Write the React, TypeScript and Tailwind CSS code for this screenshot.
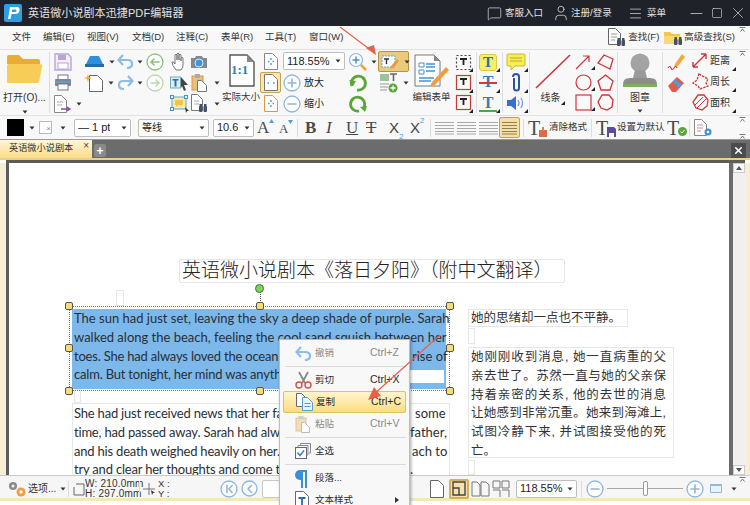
import type { ReactNode } from "react"
import { Minus, Square, X, Menu, User, MessageSquare } from "lucide-react"

const CJK = "font-['Liberation_Sans','Noto_Sans_CJK_SC',sans-serif]"

// px-unit svg so the drawing numbers can be read straight off the screenshot
function Ic({ w, h, children, className }: { w: number; h: number; children: ReactNode; className?: string }) {
  return (
    <svg width={w} height={h} viewBox={`0 0 ${w} ${h}`} fill="none" className={`shrink-0 ${className ?? ""}`}>
      {children}
    </svg>
  )
}

function Caret({ className }: { className?: string }) {
  return (
    <svg width="6" height="4" viewBox="0 0 6 4" className={`shrink-0 ${className ?? ""}`}>
      <path d="M0.5 0.5h5L3 3.5z" fill="#333" />
    </svg>
  )
}

function Corner() {
  return (
    <svg width="4" height="4" viewBox="0 0 4 4" className="absolute right-0 bottom-0">
      <path d="M4 0v4H0z" fill="#222" />
    </svg>
  )
}

function Collapse({ className }: { className?: string }) {
  return (
    <svg width="7" height="5" viewBox="0 0 7 5" className={className}>
      <path d="M0.5 0.5h6M1.5 4.5L3.5 2l2 2.5" stroke="#777" fill="none" />
    </svg>
  )
}

function Doc({ w = 14, h = 18, stroke = "#555", fill = "#fff", x = 0.5, y = 0.5 }: { w?: number; h?: number; stroke?: string; fill?: string; x?: number; y?: number }) {
  return <path d={`M${x} ${y}h${w - 5}l5 5v${h - 5}h-${w}z`} stroke={stroke} fill={fill} />
}

function Binoculars({ x, y }: { x: number; y: number }) {
  return (
    <g fill="#44506a">
      <rect x={x} y={y + 2} width="3.5" height="6" rx="1" />
      <rect x={x + 4.5} y={y + 2} width="3.5" height="6" rx="1" />
      <rect x={x + 0.5} y={y} width="2.5" height="3" />
      <rect x={x + 5} y={y} width="2.5" height="3" />
    </g>
  )
}

function Circle({ d, stroke = "#8fb7dc", size = 18 }: { d: string; stroke?: string; size?: number }) {
  return (
    <Ic w={size} h={size}>
      <circle cx={size / 2} cy={size / 2} r={size / 2 - 1} stroke={stroke} strokeWidth="1.3" fill="#fff" />
      <path d={d} stroke={stroke} strokeWidth="1.6" strokeLinecap="round" strokeLinejoin="round" />
    </Ic>
  )
}

function Row({ children, className }: { children: ReactNode; className?: string }) {
  return <div className={`h-[21px] flex items-center ${className ?? ""}`}>{children}</div>
}

function Col({ className, children }: { className: string; children: ReactNode }) {
  return <div className={`shrink-0 flex flex-col pt-[1px] ${className}`}>{children}</div>
}

function Drop({ className, label, text }: { className: string; label: string; text?: string }) {
  return (
    <div className={`h-[18px] shrink-0 bg-white border border-[#bdbdbd] rounded-[2px] flex items-center justify-between pl-[3px] pr-[3px] text-[#222] ${text ?? "text-[11px]"} ${className}`}>
      <span className="whitespace-nowrap overflow-hidden">{label}</span>
      <Caret className="ml-[1px]" />
    </div>
  )
}

function Sep({ className }: { className: string }) {
  return <div className={`w-px shrink-0 bg-[#dcdcdc] ${className}`} />
}

function Titlebar() {
  return (
    <div className="h-[26px] shrink-0 bg-[#1f2229] flex items-center pl-[4px] text-[#e3e3e3] text-[11px]">
      <div className="w-[18px] h-[18px] rounded-[2px] bg-[#2d9fe0] flex items-center justify-center">
        <Ic w={14} h={14}>
          <path d="M2 13L4 1h7q3 0 2.5 3.5T9 8H5.5L4.5 13z" fill="#fff" />
          <path d="M6.2 3.5L5.8 6h3q1.5 0 1.7-1.3T9 3.5z" fill="#2d9fe0" />
        </Ic>
      </div>
      <span className="ml-[6px] tracking-[0.1px]">英语微小说剧本迅捷PDF编辑器</span>
      <div className="ml-auto flex items-center text-[9.5px]">
        <MessageSquare size={15} strokeWidth={1.1} />
        <span className="ml-[3px] w-[36px] whitespace-nowrap">客服入口</span>
        <User size={18} strokeWidth={1} className="ml-[11px]" />
        <span className="ml-[1px] w-[41px] whitespace-nowrap">注册/登录</span>
        <Menu size={15} strokeWidth={1.1} className="ml-[16px]" />
        <span className="ml-[4px] w-[19px] whitespace-nowrap">菜单</span>
        <Minus size={19} strokeWidth={0.9} className="ml-[21px]" />
        <Square size={12} strokeWidth={1.2} className="ml-[5px]" />
        <X size={18} strokeWidth={0.9} className="ml-[6px] mr-[3px]" />
      </div>
    </div>
  )
}

const menus = [
  { label: "文件", w: "w-[31px]" },
  { label: "编辑(E)", w: "w-[44px]" },
  { label: "视图(V)", w: "w-[45px]" },
  { label: "文档(D)", w: "w-[44px]" },
  { label: "注释(C)", w: "w-[45px]" },
  { label: "表单(R)", w: "w-[44px]" },
  { label: "工具(T)", w: "w-[44px]" },
  { label: "窗口(W)", w: "w-[44px]" },
]

function Menubar() {
  return (
    <div className="h-[24px] shrink-0 bg-[#f8f8f8] border-b border-[#e2e2e2] flex items-center pl-[12px] text-[9.5px] text-[#333] relative">
      {menus.map((m) => (
        <span key={m.label} className={`${m.w} whitespace-nowrap`}>{m.label}</span>
      ))}
      <div className="ml-auto flex items-center pr-[15px]">
        <Ic w={18} h={19}>
          <Doc w={12} h={16} stroke="#666" />
          <path d="M3 6h6M3 9h6M3 12h4" stroke="#999" />
          <Binoculars x={9} y={10} />
        </Ic>
        <span className="ml-[2px] mr-[4px] whitespace-nowrap">查找(F)</span>
        <Ic w={19} h={17}>
          <path d="M1 3h6l2 2h8v10H1z" fill="#f6c649" />
          <path d="M1 7h17l-2 8H1z" fill="#fbd97a" />
          <Binoculars x={11} y={8} />
        </Ic>
        <span className="ml-[2px] whitespace-nowrap">高级查找(S)</span>
      </div>
      <Collapse className="absolute right-[4px] top-[1px]" />
    </div>
  )
}

function Ribbon() {
  return (
    <div className="h-[66px] shrink-0 bg-[#f8f8f8] border-b border-[#e2e2e2] flex text-[10px] text-[#333] relative">
      {/* open */}
      <div className="w-[50px] shrink-0 flex flex-col items-center border-r border-[#dedede] my-[2px]">
        <Ic w={38} h={30} className="mt-[2px]">
          <path d="M1 3q0-2 2-2h10l4 4h15q2 0 2 2v3H1z" fill="#e9ad2f" />
          <path d="M1 28V12q0-2 2-2h31q3 0 2 3l-3 15q-.4 1-2 1H2q-1 0-1-1z" fill="#f7cd57" />
        </Ic>
        <span className="mt-[6px] whitespace-nowrap">打开(O)...</span>
        <Caret className="mt-[5px]" />
      </div>
      {/* save print export */}
      <Col className="w-[32px] pl-[4px]">
        <Row>
          <Ic w={18} h={18}>
            <path d="M1 1h13l3 3v13H1z" stroke="#b9a5d4" strokeWidth="1.4" fill="#f4eefa" />
            <rect x="4" y="2" width="8" height="5" fill="#b9a5d4" />
            <rect x="4" y="10" width="10" height="6" fill="#fff" stroke="#b9a5d4" />
          </Ic>
        </Row>
        <Row>
          <Ic w={18} h={17}>
            <rect x="4" y="1" width="10" height="5" fill="#fff" stroke="#777" />
            <rect x="1" y="5" width="16" height="7" rx="1" fill="#7b8794" />
            <rect x="4" y="10" width="10" height="6" fill="#fff" stroke="#777" />
            <path d="M1 8h16" stroke="#55aee0" />
          </Ic>
        </Row>
        <Row>
          <Ic w={18} h={18}>
            <Doc w={12} h={17} stroke="#888" />
            <path d="M3 7h6M3 10h5" stroke="#aaa" />
            <path d="M7 14h8m-2-2l3 2-3 2" stroke="#8e44ad" strokeWidth="1.3" />
          </Ic>
          <Caret className="ml-[4px]" />
        </Row>
      </Col>
      {/* stamp new */}
      <Col className="w-[32px] pl-[2px]">
        <Row>
          <Ic w={21} h={13}>
            <path d="M6 1h9l4 8H2z" fill="#2f8fdc" />
            <path d="M1 9h19v3H1z" fill="#1a6fb5" />
          </Ic>
          <Caret className="ml-[4px]" />
        </Row>
        <Row>
          <Ic w={20} h={18}>
            <Doc w={13} h={16} x={5.5} y={1.5} stroke="#666" />
            <path d="M4 0l1 3 3 1-3 1-1 3-1-3-3-1 3-1z" fill="#f3a93a" />
          </Ic>
          <Caret className="ml-[4px]" />
        </Row>
      </Col>
      {/* undo redo */}
      <Col className="w-[27px] pl-[3px]">
        <Row>
          <Ic w={17} h={15}>
            <path d="M2 6h9q4 0 4 4t-5 4" stroke="#8dbde6" strokeWidth="2.2" />
            <path d="M6 1L1.5 6 6 11" stroke="#8dbde6" strokeWidth="2.2" />
          </Ic>
          <Caret className="ml-[3px]" />
        </Row>
        <Row>
          <Ic w={17} h={15}>
            <path d="M15 6H6q-4 0-4 4t5 4" stroke="#8dbde6" strokeWidth="2.2" />
            <path d="M11 1l4.5 5-4.5 5" stroke="#8dbde6" strokeWidth="2.2" />
          </Ic>
          <Caret className="ml-[3px]" />
        </Row>
      </Col>
      {/* back forward */}
      <Col className="w-[29px] pl-[5px]">
        <Row><Circle stroke="#8fbf7a" d="M13 9H5m3-3L5 9l3 3" /></Row>
        <Row><Circle stroke="#b9d8ab" d="M5 9h8m-3-3l3 3-3 3" /></Row>
      </Col>
      {/* tools */}
      <Col className="w-[52px]">
        <Row className="pl-[1px]">
          <Ic w={16} h={19}>
            <path d="M5 18Q1 13 1 10q1-1 3 2V3q1-2 2 0v5-6q1-2 2 0v6-5q1-2 2 0v6-3q1-1.500 2 0v7q0 3-2 5z" stroke="#777" fill="#fff" />
          </Ic>
          <Ic w={18} h={14} className="ml-[3px]">
            <path d="M1 3h4l1-2h6l1 2h4v10H1z" fill="#7d8a94" />
            <circle cx="9" cy="8" r="4" fill="#3e97de" stroke="#dce7ef" />
          </Ic>
        </Row>
        <Row>
          <Ic w={20} h={18}>
            <rect x="0.500" y="3" width="10" height="11" fill="#dcecf8" stroke="#7aa" />
            <path d="M2.500 5h6v1.500H6.500v6H4.500v-6h-2z" fill="#2d6ea8" />
            <path d="M11 3l7 8h-4l2 5-2 1-2-5-1 2z" fill="#444" />
          </Ic>
          <Ic w={16} h={19} className="ml-[1px]">
            <rect x="1" y="3" width="11" height="14" fill="#ecc07c" stroke="#d49a45" />
            <rect x="4" y="1" width="5" height="4" fill="#aaa" />
            <Doc w={9} h={11} x={6.500} y={7.500} stroke="#777" />
          </Ic>
          <Caret className="ml-[7px]" />
        </Row>
        <Row>
          <Ic w={20} h={18}>
            <rect x="2" y="2" width="14" height="12" fill="#fbe9a8" stroke="#5aa5dc" />
            <path d="M5 5h8v5H8l-2 2v-2H5z" fill="#f0c24e" />
            <rect x="0.500" y="0.500" width="3" height="3" fill="#fff" stroke="#3f92d2" />
            <rect x="14.500" y="0.500" width="3" height="3" fill="#fff" stroke="#3f92d2" />
            <rect x="0.500" y="12.500" width="3" height="3" fill="#fff" stroke="#3f92d2" />
            <path d="M15 12l4 4-2 0-1 2z" fill="#333" />
          </Ic>
          <Ic w={16} h={19} className="ml-[1px]">
            <Doc w={11} h={16} stroke="#777" />
            <path d="M3 7h5M3 10h5" stroke="#aaa" />
            <Binoculars x={8} y={10} />
          </Ic>
          <Caret className="ml-[7px]" />
        </Row>
      </Col>
      {/* 1:1 */}
      <div className="w-[38px] shrink-0 flex flex-col items-center relative">
        <Ic w={27} h={33} className="mt-[4px]">
          <path d="M2 1h17l7 7v24H2z" stroke="#555" strokeWidth="1.400" fill="#fff" />
          <path d="M19 1v7h7z" fill="#888" />
        </Ic>
        <span className="absolute left-[9px] top-[12px] text-[#2f7ec0] text-[13px] leading-[16px] font-['Liberation_Serif',serif] font-bold">1:1</span>
        <span className="mt-[3px] whitespace-nowrap text-[9.500px]">实际大小</span>
      </div>
      {/* fit buttons */}
      <Col className="w-[23px]">
        <Row className="pl-[4px]">
          <Ic w={14} h={17}>
            <Doc w={13} h={16} stroke="#888" />
            <path d="M7 5v2m0 3v2M4 8.500h1.500m3 0H10" stroke="#4a9fdc" strokeWidth="1.400" />
          </Ic>
        </Row>
        <div className="h-[21px] w-[21px] border border-[#c8a24c] bg-[#f9e6b0] rounded-[2px] flex items-center justify-center">
          <Ic w={14} h={17}>
            <Doc w={13} h={16} stroke="#777" />
            <path d="M3.500 9h1.500m4 0h1.500" stroke="#4a9fdc" strokeWidth="1.600" />
          </Ic>
        </div>
        <Row className="pl-[4px]">
          <Ic w={14} h={17}>
            <Doc w={13} h={16} stroke="#d89a3a" />
            <path d="M7 5v2m0 3v2M4 8.500h1.500m3 0H10" stroke="#4a9fdc" strokeWidth="1.400" />
          </Ic>
        </Row>
      </Col>
      {/* zoom */}
      <Col className="w-[64px] !pt-[2px]">
        <Drop className="w-[62px]" label="118.55%" />
        <Row className="mt-[2px]">
          <Circle d="M5 9h8M9 5v8" />
          <span className="ml-[3px] text-[#222]">放大</span>
        </Row>
        <Row>
          <Circle d="M5 9h8" />
          <span className="ml-[3px] text-[#222]">缩小</span>
        </Row>
      </Col>
      <Col className="w-[31px] pl-[1px]">
        <Row>
          <Ic w={19} h={19}>
            <circle cx="8" cy="8" r="6.500" stroke="#8fb7dc" strokeWidth="1.200" fill="#fff" />
            <path d="M4.500 8h7M8 4.500v7" stroke="#3f92d2" strokeWidth="1.500" />
            <path d="M13 13l5 5" stroke="#e8a33c" strokeWidth="2.500" />
          </Ic>
          <Caret className="ml-[4px]" />
        </Row>
        <Row className="pl-[1px]">
          <Ic w={18} h={18}>
            <path d="M3 12a7 7 0 1 1 5 4" stroke="#5aa53a" strokeWidth="2.800" />
            <path d="M0 6l7 1-3 5z" fill="#5aa53a" />
          </Ic>
        </Row>
        <Row className="pl-[1px]">
          <Ic w={18} h={18}>
            <path d="M15 12a7 7 0 1 0-5 4" stroke="#5aa53a" strokeWidth="2.800" />
            <path d="M18 11l-7 1 5 5z" fill="#5aa53a" />
          </Ic>
        </Row>
      </Col>
      {/* edit tools */}
      <Col className="w-[35px] !pt-0">
        <div className="h-[21px] w-[31px] border border-[#b59245] bg-[#ecca7c] rounded-[2px] flex items-center pl-[1px] mt-[1px]">
          <Ic w={20} h={16}>
            <rect x="2" y="2" width="13" height="11" fill="#fff" stroke="#5aa5dc" strokeDasharray="2 1" />
            <path d="M4 5h5M6.500 5v5" stroke="#333" strokeWidth="1.400" />
            <path d="M11 12l6-7 2 2-6 7-3 1z" fill="#ee9a3a" />
          </Ic>
          <Caret className="ml-[4px]" />
        </div>
        <div className="h-[21px] flex items-center pl-[2px]">
          <Ic w={18} h={20}>
            <rect x="0" y="1" width="9" height="7" fill="#9cc3a0" />
            <path d="M10 1h7M13.500 1v7" stroke="#666" strokeWidth="1.600" />
            <path d="M0 11h9M0 14h8M0 17h7" stroke="#999" />
            <circle cx="13" cy="15" r="4.500" fill="#5aa53a" />
            <path d="M10.500 15h5M13 12.500v5" stroke="#fff" strokeWidth="1.300" />
          </Ic>
          <Caret className="ml-[5px]" />
        </div>
      </Col>
      <div className="w-[37px] shrink-0 flex flex-col items-center">
        <Ic w={36} h={33} className="mt-[4px]">
          <path d="M1 1h19l6 6v25H1z" stroke="#777" fill="#fff" />
          <path d="M20 1v6h6z" fill="#888" />
          <path d="M5 9h5v4H5zM5 16h5v4H5z" stroke="#3f92d2" />
          <path d="M12 10h9M12 13h9M12 17h9M5 24h15M5 27h12" stroke="#3f92d2" strokeWidth="1.300" />
          <path d="M18 28l14-15 3 3-14 15-5 1z" fill="#ef9e3e" />
        </Ic>
        <span className="whitespace-nowrap mt-[3px] text-[9.500px]">编辑表单</span>
      </div>
      {/* form boxes */}
      <Col className="w-[27px] pl-[5px] border-r border-[#dedede] my-[2px] !pt-0">
        {["#444", "#c73a3a", "#c73a3a"].map((c, i) => (
          <Row key={i} className="relative w-[18px]">
            <Ic w={17} h={17}>
              <rect x="1.500" y="1.500" width="14" height="14" stroke={c} strokeWidth="1.200" strokeDasharray={i === 0 ? "2 2" : undefined} />
              <path d="M5 5h7M8.500 5v6" stroke="#222" strokeWidth="1.800" />
            </Ic>
            <Corner />
          </Row>
        ))}
      </Col>
      {/* text markup */}
      <Col className="w-[26px] pl-[2px] border-r border-[#dedede] my-[2px] !pt-0">
        <Row className="relative w-[21px]">
          <div className="w-[18px] h-[17px] rounded-[3px] bg-[#f8f06a] border border-[#d8c94c] flex items-center justify-center">
            <span className="text-[#2b6cb5] text-[15px] leading-none font-bold font-['Liberation_Serif',serif]">T</span>
          </div>
          <Corner />
        </Row>
        <Row className="relative w-[21px] justify-center pr-[3px]">
          <span className="text-[#3a78bd] text-[16px] leading-none font-bold font-['Liberation_Serif',serif]">T</span>
          <div className="absolute left-0 right-[3px] top-[10px] h-[2px] bg-[#d23b3b]" />
          <Corner />
        </Row>
        <Row className="relative w-[21px] justify-center pr-[3px]">
          <span className="text-[#3a78bd] text-[16px] leading-none font-bold font-['Liberation_Serif',serif]">T</span>
          <div className="absolute left-0 right-[3px] bottom-[1px] h-[2px] bg-[#4da64a]" />
          <Corner />
        </Row>
      </Col>
      <Col className="w-[27px] pl-[3px] border-r border-[#dedede] my-[2px] !pt-0">
        <Row className="relative w-[22px]">
          <Ic w={20} h={18}>
            <path d="M2 1h16q1 0 1 1v10q0 1-1 1H9l-4 4v-4H2q-1 0-1-1V2q0-1 1-1z" fill="#f7ee4f" stroke="#c9b93a" />
            <path d="M4 5h12M4 8h12" stroke="#b8a832" />
          </Ic>
          <Corner />
        </Row>
        <Row className="relative w-[22px] justify-center pr-[2px]">
          <Ic w={10} h={20}>
            <path d="M2 5a3 3 0 0 1 6 0v11a2.500 2.500 0 0 1-5 0V6" stroke="#2a52a8" strokeWidth="2" />
          </Ic>
          <Corner />
        </Row>
        <Row className="relative w-[22px]">
          <Ic w={20} h={16}>
            <path d="M1 5h4l5-4v14l-5-4H1z" fill="#3a6fd0" />
            <path d="M12 5q2 3 0 6M15 3q3 5 0 10" stroke="#7d9bc9" strokeWidth="1.300" />
          </Ic>
          <Corner />
        </Row>
      </Col>
      {/* lines */}
      <div className="w-[45px] shrink-0 flex flex-col items-center">
        <Ic w={36} h={36} className="mt-[3px]">
          <path d="M1 35L35 2" stroke="#d0343c" strokeWidth="1.600" />
        </Ic>
        <span className="mt-[1px] relative pr-[4px]">线条<Corner /></span>
      </div>
      <Col className="w-[43px] border-r border-[#dedede] my-[2px] !pt-0">
        <Row>
          <div className="relative w-[20px]">
            <Ic w={16} h={16}>
              <path d="M1 15L14 2m-6 0h6v6" stroke="#d0343c" strokeWidth="1.200" />
            </Ic>
            <Corner />
          </div>
          <Ic w={17} h={17} className="ml-[2px]">
            <path d="M7 1l9 4-3 10-6-3-6-3z" stroke="#d0343c" strokeWidth="1.300" />
          </Ic>
        </Row>
        <Row>
          <div className="relative w-[20px]">
            <Ic w={17} h={17}>
              <circle cx="8.500" cy="8.500" r="7.500" stroke="#d0343c" strokeWidth="1.200" />
            </Ic>
            <Corner />
          </div>
          <Ic w={17} h={17} className="ml-[2px]">
            <path d="M8.500 1L16 7l-3 9H4L1 7z" stroke="#d0343c" strokeWidth="1.300" />
          </Ic>
        </Row>
        <Row>
          <div className="relative w-[20px]">
            <Ic w={17} h={17}>
              <rect x="1" y="1" width="15" height="15" stroke="#d0343c" strokeWidth="1.200" />
            </Ic>
            <Corner />
          </div>
          <Ic w={17} h={17} className="ml-[2px]">
            <path d="M5 1h7l4 5-1 7-5 3-6-2-3-6z" stroke="#d0343c" strokeWidth="1.300" />
          </Ic>
        </Row>
      </Col>
      {/* stamp */}
      <div className="w-[45px] shrink-0 flex flex-col items-center border-r border-[#dedede] my-[2px]">
        <Ic w={36} h={37} className="">
          <circle cx="18" cy="11" r="9.500" fill="#a3a3a3" />
          <path d="M13 18h10l2 8H11z" fill="#9a9a9a" />
          <path d="M1 32q0-6 7-6h20q7 0 7 6z" fill="#8c8c8c" />
          <rect x="1" y="32" width="34" height="3" fill="#7bb063" />
        </Ic>
        <span className="mt-[1px]">图章</span>
        <Caret className="mt-[4px]" />
      </div>
      {/* measure */}
      <Col className="w-[27px] pl-[4px] !pt-0">
        <Row className="relative h-[24px]">
          <Ic w={19} h={19}>
            <path d="M8 11L15 1l3 3-7 9-4 1z" fill="#f3a93a" />
            <path d="M1 15q2-3 3 0t3 0 3 0" stroke="#d0343c" strokeWidth="1.100" />
          </Ic>
        </Row>
        <Row className="h-[20px]">
          <Ic w={18} h={17}>
            <path d="M1 10L10 1l7 6-8 9H5z" fill="#e55b4a" />
            <path d="M8 3l7 6-3 3-6-6z" fill="#4a9fdc" />
          </Ic>
        </Row>
      </Col>
      <Col className="w-[55px] pl-[2px] !pt-0">
        <Row className="h-[21px] relative w-[44px]">
          <Ic w={15} h={15}>
            <path d="M1 14L14 1M1 14v-5m0 5h5M14 1v5m0-5H9" stroke="#d0343c" strokeWidth="1.400" />
          </Ic>
          <span className="ml-[3px] whitespace-nowrap">距离</span>
          <Corner />
        </Row>
        <Row className="h-[21px] relative w-[44px]">
          <Ic w={17} h={17}>
            <path d="M7 1l9 5-2 4 2 3-8 3-2-3-5-3 4-3z" stroke="#d0343c" strokeWidth="1.300" strokeDasharray="2.500 1" />
          </Ic>
          <span className="ml-[1px] whitespace-nowrap">周长</span>
          <Corner />
        </Row>
        <Row className="h-[21px] relative w-[44px]">
          <Ic w={17} h={17}>
            <path d="M6 1h6l4 5-1 6-5 4-6-2-3-6z" stroke="#d0343c" strokeWidth="1.300" />
            <path d="M3 11L11 3M5 14l9-9" stroke="#d0343c" />
          </Ic>
          <span className="ml-[1px] whitespace-nowrap">面积</span>
          <Corner />
        </Row>
      </Col>
      <Collapse className="absolute right-[4px] top-[1px]" />
    </div>
  )
}

function Lines({ w = 19 }: { w?: number }) {
  return (
    <Ic w={w} h={14}>
      <path d={`M0 1.500h${w}M0 4.500h${w}M0 7.500h${w}M0 10.500h${w}M0 13h${w}`} stroke="#a8a8a8" />
    </Ic>
  )
}

function Glyph({ children, className }: { children: ReactNode; className: string }) {
  return <span className={`font-['Liberation_Serif',serif] text-[#4a4a4a] leading-none ${className}`}>{children}</span>
}

function Formatbar() {
  return (
    <div className="h-[23px] shrink-0 bg-[#f8f8f8] flex items-center pl-[7px] text-[10px] text-[#333] relative">
      <div className="w-[17px] h-[17px] bg-black" />
      <Caret className="ml-[5px]" />
      <div className="w-[13px] h-[13px] bg-white border border-[#bbb] ml-[4px] relative">
        <span className="absolute right-0 bottom-0 text-[8px] leading-none text-[#888]">×</span>
      </div>
      <Caret className="ml-[8px]" />
      <Drop className="w-[57px] ml-[8px]" label="— 1 pt" />
      <Drop className="w-[71px] ml-[7px]" label="等线" text="text-[10px]" />
      <Drop className="w-[41px] ml-[4px]" label="10.6" />
      <div className="w-[20px] ml-[3px] flex items-start">
        <Glyph className="text-[17px]">A</Glyph>
        <svg width="5" height="4"><path d="M0 4h5L2.500 0z" fill="#4a9fdc" /></svg>
      </div>
      <div className="w-[18px] ml-[2px] flex items-start">
        <Glyph className="text-[13px] mt-[2px]">A</Glyph>
        <svg width="5" height="4"><path d="M0 0h5L2.500 4z" fill="#4a9fdc" /></svg>
      </div>
      <Sep className="h-[18px] ml-[0px]" />
      <Glyph className="text-[17px] font-bold ml-[7px] w-[12px]">B</Glyph>
      <Glyph className="text-[17px] italic ml-[9px] w-[11px]">I</Glyph>
      <Glyph className="text-[17px] underline ml-[9px] w-[12px]">U</Glyph>
      <Glyph className="text-[17px] line-through ml-[8px] w-[14px]">T</Glyph>
      <span className="ml-[9px] w-[21px] text-[15px] leading-none text-[#444] font-['Liberation_Sans',sans-serif]">X<sub className="text-[8px] text-[#4a9fdc] align-sub">2</sub></span>
      <span className="w-[20px] text-[15px] leading-none text-[#444] font-['Liberation_Sans',sans-serif]">X<sup className="text-[8px] text-[#4a9fdc] align-super">2</sup></span>
      <Sep className="h-[18px] ml-[0px]" />
      <div className="ml-[4px]"><Lines /></div>
      <div className="ml-[3px]"><Lines /></div>
      <div className="ml-[3px]"><Lines /></div>
      <div className="w-[21px] h-[21px] ml-[1px] bg-[#f6dfa6] border border-[#c8a24c] rounded-[2px] flex items-center justify-center">
        <Ic w={15} h={14}>
          <path d="M0 1.500h15M0 4.500h15M0 7.500h15M0 10.500h15M0 13h15" stroke="#8d8054" />
        </Ic>
      </div>
      <Sep className="h-[18px] ml-[3px]" />
      <Glyph className="text-[20px] ml-[4px] w-[11px]">T</Glyph>
      <Ic w={8} h={10} className="mt-[8px]">
        <rect x="0" y="3" width="8" height="7" fill="#e0694a" />
        <rect x="3" y="0" width="2" height="4" fill="#c98a4a" />
      </Ic>
      <span className="ml-[2px] w-[37px] whitespace-nowrap text-[9.500px]">清除格式</span>
      <Sep className="h-[18px] ml-[5px]" />
      <Glyph className="text-[20px] ml-[4px] w-[11px]">T</Glyph>
      <Ic w={9} h={10} className="mt-[8px]">
        <path d="M0 0h7l2 2v8H0z" fill="#5c4a9c" />
        <rect x="2" y="6" width="5" height="4" fill="#fff" />
      </Ic>
      <span className="ml-[1px] w-[45px] whitespace-nowrap text-[9.500px]">设置为默认</span>
      <Glyph className="text-[20px] ml-[5px] w-[11px]">T</Glyph>
      <Ic w={9} h={9} className="mt-[8px]">
        <circle cx="4.500" cy="4.500" r="4.500" fill="#5aa53a" />
        <path d="M2.500 4.500l1.500 1.500 2.500-3" stroke="#fff" />
      </Ic>
      <Sep className="h-[18px] ml-[2px]" />
      <Ic w={19} h={18} className="ml-[4px]">
        <Doc w={12} h={16} stroke="#888" />
        <path d="M3 6h6M3 9h6M3 12h4" stroke="#d88" />
        <circle cx="14" cy="13" r="3.500" fill="#3f92d2" />
        <circle cx="14" cy="13" r="1.300" fill="#fff" />
      </Ic>
      <Collapse className="absolute right-[4px] top-[1px]" />
      <Collapse className="absolute right-[4px] bottom-[0px]" />
    </div>
  )
}

function Tabstrip() {
  return (
    <div className="h-[19px] shrink-0 bg-[#6c6c6c] border-t border-[#9a9a9a] flex items-end relative">
      <div className="w-[92px] h-[18px] bg-gradient-to-b from-[#fff6d8] to-[#fbdc86] flex items-center pl-[9px] text-[9.2px] text-[#333] relative">
        英语微小说剧本
        <span className="absolute right-[3px] top-[1px] text-[10px] leading-none text-[#444]">×</span>
      </div>
      <div className="w-[12px] h-[13px] ml-[2px] mb-[1px] bg-[#8a8a8a] rounded-[2px] flex items-center justify-center text-white font-bold text-[12px] leading-none">+</div>
      <div className="ml-auto mr-[4px] w-[15px] h-[15px] bg-[#4c4c4c] flex items-center justify-center">
        <X size={11} strokeWidth={3.5} color="#fff" />
      </div>
    </div>
  )
}

function Line({ children, className }: { children: ReactNode; className?: string }) {
  return <div className={`whitespace-nowrap [text-align:justify] [text-align-last:justify] h-[18.8px] leading-[18.8px] ${className ?? ""}`}>{children}</div>
}

// a paragraph line whose middle is hidden behind the context menu: only the two ends show
function Split({ l, r, lw, rw }: { l: string; r?: string; lw: string; rw?: string }) {
  return (
    <div className="flex justify-between h-[18.8px] leading-[18.8px] whitespace-nowrap w-[371px]">
      <div className={`[text-align-last:justify] tracking-[-0.2px] ${lw}`}>{l}</div>
      {r && <div className={`[text-align-last:justify] ${rw ?? ""}`}>{r}</div>}
    </div>
  )
}

function Handle({ x, y }: { x: number; y: number }) {
  return <div className="absolute w-[8px] h-[8px] bg-[#f7dc7a] border border-[#555] rounded-[2px]" style={{ left: x - 4, top: y - 4 }} />
}

// everything in here sits on the PDF page itself, so it is placed by page coordinates
function Page() {
  const cn = ["她刚刚收到消息, 她一直病重的父", "亲去世了。苏然一直与她的父亲保", "持着亲密的关系, 他的去世的消息", "让她感到非常沉重。她来到海滩上,", "试图冷静下来, 并试图接受他的死"]
  return (
    <div className="flex-1 bg-white relative overflow-hidden text-[#333]">
      <div className="absolute left-[170px] top-[96px] w-[386px] h-[24px] border border-[#e6e6e6] rounded-[2px] text-[19px] leading-[22px] pl-[2px] text-[#222] whitespace-nowrap font-light">
        英语微小说剧本《落日夕阳》（附中文翻译）
      </div>
      <div className="absolute left-[107px] top-[127px] w-[8px] h-[16px] border border-[#e6e6e6]" />
      <div className="absolute left-[65px] top-[226px] w-[7px] h-[14px] border border-[#e6e6e6]" />

      {/* selection */}
      <div className="absolute left-[60px] top-[143px] w-[381px] h-[85px] border border-dotted border-[#777]" />
      <div className="absolute left-[63px] top-[146px] w-[374px] h-[80px] border-2 border-[#7db8ea] bg-white" />
      <div className="absolute left-[65px] top-[147px] w-[370px] h-[60px] bg-[#7db8ea]" />
      <div className="absolute left-[65px] top-[207px] w-[335px] h-[13px] bg-[#7db8ea]" />
      <div className="absolute left-[65px] top-[220px] w-[370px] h-[5px] bg-[#7db8ea]" />
      <div className="absolute left-[65px] top-[146px] w-[371px] text-[13px] font-['Lato',sans-serif] text-[#2a2f36]">
        <Line>The sun had just set, leaving the sky a deep shade of purple. Sarah</Line>
        <Line>walked along the beach, feeling the cool sand squish between her</Line>
        <Split l="toes. She had always loved the ocean" lw="w-[203px]" r="rise of" rw="w-[33px]" />
        <Split l="calm. But tonight, her mind was anyth" lw="w-[206px]" />
      </div>
      <div className="absolute left-[251px] top-[122px] h-[20px] border-l border-dotted border-[#555]" />
      <div className="absolute left-[246px] top-[121px] w-[9px] h-[9px] rounded-full bg-[#7ad65a] border border-[#3c7a2c]" />
      <Handle x={60} y={143} />
      <Handle x={251} y={143} />
      <Handle x={441} y={143} />
      <Handle x={60} y={185} />
      <Handle x={441} y={185} />
      <Handle x={60} y={228} />
      <Handle x={251} y={228} />
      <Handle x={441} y={228} />

      {/* next paragraph */}
      <div className="absolute left-[63px] top-[240px] w-[378px] h-[90px] border border-[#e6e6e6] pl-[1px] text-[13px] font-['Lato',sans-serif] text-[#2a2f36]">
        <Split l="She had just received news that her fat" lw="w-[207px]" r="some" rw="w-[30px]" />
        <Split l="time, had passed away. Sarah had alw" lw="w-[206px]" r="father," rw="w-[35px]" />
        <Split l="and his death weighed heavily on her." lw="w-[203px]" r="ach to" rw="w-[33px]" />
        <Split l="try and clear her thoughts and come t" lw="w-[206px]" r="." rw="mr-[32px]" />
      </div>

      <div className="absolute left-[459px] top-[146px] w-[160px] h-[18px] border border-[#e6e6e6] text-[12.5px] leading-[16px] pl-[2px] whitespace-nowrap">
        她的思绪却一点也不平静。
      </div>
      <div className="absolute left-[459px] top-[165px] w-[7px] h-[16px] border border-[#e6e6e6]" />
      <div className="absolute left-[459px] top-[184px] w-[206px] h-[111px] border border-[#e6e6e6] text-[12.5px] pl-[2px]">
        {cn.map((t) => (
          <Line key={t} className="w-[195px]">{t}</Line>
        ))}
        <div className="leading-[18.800px]">亡。</div>
      </div>
      <div className="absolute left-[459px] top-[297px] w-[7px] h-[15px] border border-[#e6e6e6]" />
    </div>
  )
}

function Scrollbar() {
  return (
    <div className="w-[12px] shrink-0 bg-[#f0f0f0] flex flex-col justify-between">
      <div className="h-[10px] bg-[#fafafa] border border-[#ccc] flex items-center justify-center">
        <svg width="6" height="4"><path d="M0 4h6L3 0z" fill="#555" /></svg>
      </div>
      <div className="h-[10px] bg-[#fafafa] border border-[#ccc] flex items-center justify-center">
        <svg width="6" height="4"><path d="M0 0h6L3 4z" fill="#555" /></svg>
      </div>
    </div>
  )
}

function Statusbar() {
  return (
    <div className="h-[23px] shrink-0 bg-[#f6f6f6] border-t border-[#c9c9c9] flex items-center pl-[7px] pt-[3px] text-[10px] text-[#333] relative">
      <Ic w={20} h={20}>
        <circle cx="6" cy="7" r="4" fill="#8a8a8a" />
        <circle cx="6" cy="7" r="1.500" fill="#f6f6f6" />
        <circle cx="14" cy="13" r="4.500" fill="#ef9e3e" />
        <circle cx="14" cy="13" r="1.700" fill="#f6f6f6" />
      </Ic>
      <span className="ml-[1px] w-[29px] whitespace-nowrap">选项...</span>
      <Caret className="ml-[3px]" />
      <Sep className="h-[16px] ml-[2px]" />
      <Ic w={12} h={14} className="ml-[4px]">
        <path d="M3 2h8v11H1V5" stroke="#666" />
      </Ic>
      <div className="w-[54px] font-['Liberation_Sans',sans-serif] leading-[10px] text-[10px] whitespace-nowrap tracking-[0.2px]">
        <div>W: 210.0mm</div>
        <div>H: 297.0mm</div>
      </div>
      <Sep className="h-[16px]" />
      <Ic w={14} h={14} className="ml-[3px]">
        <path d="M6 1v12M0 7h12" stroke="#777" />
        <path d="M8 8l4 3-2 0-1 2z" fill="#333" />
      </Ic>
      <div className="ml-[1px] w-[15px] font-['Liberation_Sans',sans-serif] leading-[10px] text-[9.500px] whitespace-nowrap">
        <div>X :</div>
        <div>Y :</div>
      </div>
      <div className="ml-[47px] flex items-center gap-[3px]">
        <Circle d="M7 5.500v7m5-7L9 9l3 3.500" />
        <Circle d="M10.500 5.500L7 9l3.500 3.500" size={17} />
        <div className="w-[40px] h-[18px] bg-white border border-[#c9c9c9] rounded-[2px] ml-[1px]" />
      </div>
      <div className="ml-[128px]">
        <Ic w={14} h={18}>
          <Doc w={13} h={17} stroke="#666" />
        </Ic>
      </div>
      <div className="ml-[5px] w-[20px] h-[20px] border-2 border-[#d6ae5c] bg-[#f6e2ae] rounded-[2px] flex items-center justify-center">
        <Ic w={14} h={15}>
          <path d="M1 1h12v13H1zM1 7h6v7" stroke="#444" strokeWidth="1.400" />
        </Ic>
      </div>
      <Ic w={19} h={16} className="ml-[2px]">
        <path d="M1 1h5l3 3v11H1zM10 1h5l3 3v11h-8z" stroke="#777" />
      </Ic>
      <Ic w={18} h={17} className="ml-[2px]">
        <path d="M1 1h7v7H1zM10 1h7v7h-7zM1 10h7v7M10 10h7v7" stroke="#777" />
      </Ic>
      <Drop className="w-[61px] ml-[6px]" label="118.55%" />
      <Sep className="h-[16px] ml-[4px]" />
      <div className="ml-[4px]"><Circle d="M5 9h8" /></div>
      <div className="w-[76px] mx-[3px] relative h-[1px] bg-[#aaa]">
        <div className="absolute left-[36px] -top-[7px] w-[5px] h-[15px] bg-white border border-[#999] rounded-[2px]" />
      </div>
      <Circle d="M5 9h8M9 5v8" />
      <div className="w-[12px] h-[9px] ml-[6px] border border-[#8fb7dc] bg-[#eaf3fb] rounded-[1px] border-t-2" />
      <Caret className="ml-[9px]" />
      <Collapse className="absolute right-[4px] top-[1px]" />
    </div>
  )
}

function MenuItem({ icon, label, hint, off, on, arrow }: { icon: ReactNode; label: string; hint?: string; off?: boolean; on?: boolean; arrow?: boolean }) {
  return (
    <div className={`h-[22px] mx-[3px] flex items-center rounded-[2px] ${on ? "bg-gradient-to-b from-[#fff5cc] to-[#fbdc7e] border border-[#d8c36a]" : ""} ${off ? "text-[#8a8a8a]" : "text-[#2a2a2a]"}`}>
      <div className="w-[30px] pl-[12px] flex justify-start shrink-0">{icon}</div>
      <span className="ml-[2px] text-[9.5px] w-[55px] whitespace-nowrap">{label}</span>
      {hint && <span className="text-[10.500px] font-['Liberation_Sans',sans-serif]">{hint}</span>}
      {arrow && (
        <svg width="4" height="6" className="ml-[25px]"><path d="M0 0l4 3-4 3z" fill="#333" /></svg>
      )}
    </div>
  )
}

function MenuSep() {
  return <div className="h-[5px] flex items-center pl-[5px] pr-[3px]"><div className="h-px w-full bg-[#dadada]" /></div>
}

function ContextMenu() {
  return (
    <div className="absolute left-[279px] top-[339px] w-[131px] h-[180px] bg-[#f8f8f8] border border-[#bdbdbd] shadow-[1px_1px_3px_rgba(0,0,0,0.35)] pt-[2px] flex flex-col">
      <MenuItem off label="撤销" hint="Ctrl+Z" icon={
        <Ic w={16} h={15}>
          <path d="M2 6h8q5 0 5 4t-5 4" stroke="#8dbde6" strokeWidth="2.200" />
          <path d="M6 1L1.500 6 6 11" stroke="#8dbde6" strokeWidth="2.200" />
        </Ic>} />
      <MenuSep />
      <MenuItem label="剪切" hint="Ctrl+X" icon={
        <Ic w={17} h={18}>
          <path d="M4 1l6 11M13 1L7 12" stroke="#888" strokeWidth="1.800" />
          <circle cx="4" cy="14" r="3" stroke="#d8503c" strokeWidth="1.400" />
          <circle cx="13" cy="14" r="3" stroke="#d8503c" strokeWidth="1.400" />
        </Ic>} />
      <MenuItem on label="复制" hint="Ctrl+C" icon={
        <Ic w={17} h={18}>
          <Doc w={10} h={13} stroke="#667" />
          <Doc w={10} h={13} x={6.500} y={4.500} stroke="#5a9bd0" fill="#eaf3fb" />
          <path d="M8.500 10.500h6M8.500 13.500h6" stroke="#5a9bd0" />
        </Ic>} />
      <MenuItem off label="粘贴" hint="Ctrl+V" icon={
        <Ic w={16} h={18}>
          <rect x="1" y="3" width="10" height="13" fill="#f3dcb6" stroke="#e5c391" />
          <rect x="3.500" y="1" width="5" height="3" fill="#ccc" />
          <Doc w={8} h={10} x={6.500} y={7.500} stroke="#bbb" />
        </Ic>} />
      <MenuSep />
      <MenuItem label="全选" icon={
        <Ic w={16} h={16}>
          <rect x="0.500" y="4.500" width="11" height="11" fill="#fff" stroke="#667" />
          <path d="M3 4V2.500h10V12h-1M5.500 2V.500H15.500V10H14" stroke="#889" />
          <path d="M2.500 9.500l2.500 3 4-5" stroke="#3f7ec0" strokeWidth="1.500" />
        </Ic>} />
      <MenuSep />
      <MenuItem label="段落..." icon={
        <Ic w={13} h={19}>
          <path d="M7 1H5a5 5 0 0 0 0 10h2z" fill="#3a8fd6" />
          <path d="M6 1h2v18H6zM10 1h2v18h-2zM6 1h6v2H6z" fill="#3a8fd6" />
        </Ic>} />
      <MenuItem label="文本样式" arrow icon={
        <Ic w={14} h={18}>
          <Doc w={13} h={17} stroke="#667" />
          <path d="M3.500 7h7M7 7v7" stroke="#2d6ea8" strokeWidth="1.800" />
        </Ic>} />
    </div>
  )
}

function Arrows() {
  return (
    <svg width="750" height="505" viewBox="0 0 750 505" className="absolute left-0 top-0 pointer-events-none">
      <path d="M340 27L372 51" stroke="#e8604c" strokeWidth="1.200" />
      <path d="M366 48L376 55 374 45z" fill="#e8604c" />
      <path d="M440 335L373 395" stroke="#e8604c" strokeWidth="1.200" />
      <path d="M368 400L381 396 374 387z" fill="#e8604c" />
    </svg>
  )
}

export default function App() {
  return (
    <div className={`w-[750px] h-[505px] overflow-hidden relative flex flex-col bg-white ${CJK}`}>
      <Titlebar />
      <Menubar />
      <Ribbon />
      <Formatbar />
      <Tabstrip />
      <div className="h-[2px] shrink-0 bg-[#e8cf8e]" />
      <div className="h-[3px] shrink-0 ml-[6px] mr-[5px] bg-[#5c5c5c]" />
      <div className="h-[312px] shrink-0 flex">
        <div className="w-[6px] shrink-0 bg-[#f6efd6]" />
        <div className="w-[3px] shrink-0 bg-[#5c5c5c]" />
        <Page />
        <div className="w-[4px] shrink-0 bg-[#6c6c6c]" />
        <Scrollbar />
        <div className="w-[5px] shrink-0 bg-[#f6efd6]" />
      </div>
      <Statusbar />
      <div className="h-[3px] shrink-0 bg-[#f3e8bd]" />
      <ContextMenu />
      <Arrows />
    </div>
  )
}
